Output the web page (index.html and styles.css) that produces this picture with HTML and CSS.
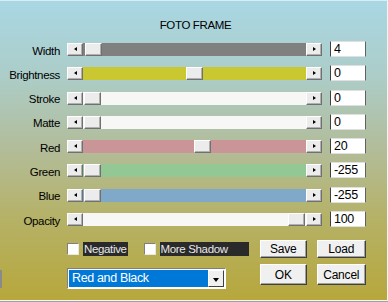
FILE: index.html
```html
<!DOCTYPE html>
<html lang="en">
<head>
    <meta charset="UTF-8" />
    <title>Foto Frame</title>
    <link rel="stylesheet" href="styles.css">
</head>
<body>
    <div class="dialog">
        <h1 class="title">FOTO FRAME</h1>

        <div class="sliders">
            <label>Width</label>
            <div class="scroll"><span class="btn left"></span><div class="track gray"><span class="thumb" style="left: 2px"></span></div><span class="btn right"></span></div>
            <input type="text" value="4" />

            <label>Brightness</label>
            <div class="scroll"><span class="btn left"></span><div class="track yellow"><span class="thumb" style="left: 103px"></span></div><span class="btn right"></span></div>
            <input type="text" value="0" />

            <label>Stroke</label>
            <div class="scroll"><span class="btn left"></span><div class="track white"><span class="thumb" style="left: 1px"></span></div><span class="btn right"></span></div>
            <input type="text" value="0" />

            <label>Matte</label>
            <div class="scroll"><span class="btn left"></span><div class="track white"><span class="thumb" style="left: 1px"></span></div><span class="btn right"></span></div>
            <input type="text" value="0" />

            <label>Red</label>
            <div class="scroll"><span class="btn left"></span><div class="track red"><span class="thumb" style="left: 111px"></span></div><span class="btn right"></span></div>
            <input type="text" value="20" />

            <label>Green</label>
            <div class="scroll"><span class="btn left"></span><div class="track green"><span class="thumb" style="left: 1px"></span></div><span class="btn right"></span></div>
            <input type="text" value="-255" />

            <label>Blue</label>
            <div class="scroll"><span class="btn left"></span><div class="track blue"><span class="thumb" style="left: 1px"></span></div><span class="btn right"></span></div>
            <input type="text" value="-255" />

            <label>Opacity</label>
            <div class="scroll"><span class="btn left"></span><div class="track white"><span class="thumb" style="left: 205px"></span></div><span class="btn right"></span></div>
            <input type="text" value="100" />
        </div>

        <div class="bottom">
            <div class="checks">
                <span class="check"><span class="box"></span><span class="check-label">Negative</span></span>
                <span class="check"><span class="box"></span><span class="check-label wide">More Shadow</span></span>
            </div>
            <div class="buttons">
                <button>Save</button>
                <button>Load</button>
            </div>

            <div class="select">
                <span class="select-value">Red and Black</span>
                <span class="select-arrow"></span>
            </div>
            <div class="buttons big">
                <button>OK</button>
                <button>Cancel</button>
            </div>
        </div>
    </div>
</body>
</html>
```

FILE: styles.css
```css
* {
    margin: 0;
    padding: 0;
    box-sizing: border-box;
}

body {
    width: 388px;
    height: 302px;
    background-color: #a0a0a0;
    font-family: "Liberation Sans", Arial, sans-serif;
    font-size: 11.5px;
    letter-spacing: -0.35px;
    color: #000;
}

.dialog {
    position: relative;
    width: 388px;
    height: 301px;
    border-top: 1px solid #d8eef4;
    border-right: 1px solid #f4f4f4;
    border-bottom: 1px solid #f4f4f4;
    background: linear-gradient(180deg, #a9d7e4 0%, #accdc8 25%, #b2bc98 50%, #b5b268 72%, #b7a73c 100%);
}

.dialog::before {
    content: "";
    position: absolute;
    left: 0;
    top: 269px;
    width: 2px;
    height: 18px;
    background-color: #8a8a8a;
}

.title {
    font-size: 11.5px;
    font-weight: normal;
    text-align: center;
    height: 40px;
    padding-top: 18px;
    padding-left: 4px;
    line-height: 13px;
}

.sliders {
    display: grid;
    grid-template-columns: 60px 255px 36px;
    grid-auto-rows: 16px;
    column-gap: 7px;
    row-gap: 8.3px;
    align-items: center;
}

.sliders label {
    text-align: right;
    line-height: 16px;
    margin-top: 3px;
}

.scroll {
    display: flex;
    height: 13px;
    margin-top: 1px;
}

.btn {
    position: relative;
    width: 16px;
    height: 13px;
    background-color: #ececec;
    border: 1px solid;
    border-color: #fff #707070 #707070 #fff;
    box-shadow: inset -1px -1px 0 #b0b0b0;
}

.btn::after {
    content: "";
    position: absolute;
    top: 3px;
    left: 6px;
    border-top: 2.5px solid transparent;
    border-bottom: 2.5px solid transparent;
}

.btn.left::after {
    border-right: 3px solid #000;
}

.btn.right::after {
    border-left: 3px solid #000;
}

.track {
    position: relative;
    flex: 1;
    height: 13px;
}

.track.gray { background-color: #808080; }
.track.yellow { background-color: #c9c830; }
.track.white { background-color: #f7f7f5; }
.track.red { background-color: #c99597; }
.track.green { background-color: #93c793; }
.track.blue { background-color: #80a8c9; }

.thumb {
    position: absolute;
    top: 0;
    width: 17px;
    height: 13px;
    background-color: #ececec;
    border: 1px solid;
    border-color: #fff #707070 #707070 #fff;
    box-shadow: inset -1px -1px 0 #b0b0b0;
}

.sliders input {
    width: 36px;
    height: 16px;
    margin-left: 1px;
    padding-left: 3px;
    font-family: inherit;
    font-size: 12.5px;
    letter-spacing: -0.3px;
    background-color: #fff;
    border: 1px solid;
    border-color: #e0e0e0 #606060 #e0e0e0 #404040;
    outline: none;
}

.bottom {
    display: grid;
    grid-template-columns: 193px 106px;
    grid-template-rows: 18px 24px;
    row-gap: 6px;
    margin-top: 13px;
    padding-left: 67px;
}

.checks {
    display: flex;
    align-items: center;
    gap: 16px;
}

.check {
    display: flex;
    align-items: center;
    gap: 4px;
}

.box {
    width: 12px;
    height: 12px;
    background-color: #fff;
    border: 1px solid;
    border-color: #808080 #e8e8e8 #e8e8e8 #808080;
}

.check-label {
    background-color: #2a2a2a;
    color: #e8e8e8;
    height: 14px;
    line-height: 14px;
    padding: 0 1px;
}

.check-label.wide {
    width: 89px;
}

.buttons {
    display: flex;
    gap: 10px;
}

.buttons button {
    width: 47px;
    height: 18px;
    font-family: inherit;
    font-size: 12px;
    letter-spacing: -0.2px;
    background-color: #f0f0f0;
    border: 1px solid;
    border-color: #fff #404040 #404040 #fff;
    box-shadow: inset -1px -1px 0 #a0a0a0;
}

.buttons button:last-child {
    width: 50px;
}

.buttons.big button {
    height: 21px;
}

.select {
    display: flex;
    align-items: stretch;
    width: 159px;
    height: 21px;
    margin-top: 4px;
    border: 1px solid;
    border-color: #808080 #fff #fff #808080;
    padding: 1px;
    background-color: #fff;
}

.select-value {
    flex: 1;
    background-color: #0078d7;
    color: #fff;
    font-size: 12.5px;
    line-height: 17px;
    padding-left: 3px;
}

.select-arrow {
    position: relative;
    width: 16px;
    background-color: #f0f0f0;
    border: 1px solid;
    border-color: #fff #404040 #404040 #fff;
}

.select-arrow::after {
    content: "";
    position: absolute;
    left: 4px;
    top: 7px;
    border-left: 3.5px solid transparent;
    border-right: 3.5px solid transparent;
    border-top: 4px solid #000;
}
```
